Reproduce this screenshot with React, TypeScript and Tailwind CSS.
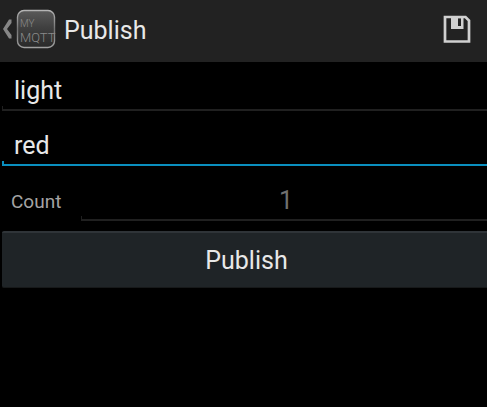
import { useState } from "react";
import type { InputHTMLAttributes } from "react";

type FieldProps = InputHTMLAttributes<HTMLInputElement> & {
  active?: boolean;
};

function Field({ active = false, className = "", ...rest }: FieldProps) {
  return (
    <div className="min-w-0 flex-1">
      <input
        {...rest}
        className={`block h-11 w-full bg-transparent pt-3 text-[25px] leading-8 outline-none ${className}`}
      />
      {/* Holo underline with its short left tick */}
      <div
        className={
          active
            ? "h-[5px] border-b-2 border-l-2 border-[#0a8fbf]"
            : "h-[5px] border-b-2 border-l border-[#202020]"
        }
      />
    </div>
  );
}

function AppLogo() {
  return (
    <svg viewBox="0 0 40 40" className="size-10" role="img" aria-label="My MQTT">
      <defs>
        <linearGradient id="logoFill" x1="0" y1="0" x2="0" y2="1">
          <stop offset="0" stopColor="#5a5a5a" />
          <stop offset="0.45" stopColor="#404040" />
          <stop offset="1" stopColor="#292929" />
        </linearGradient>
        <linearGradient id="logoEdge" x1="0" y1="0" x2="0" y2="1">
          <stop offset="0" stopColor="#b4b4b4" />
          <stop offset="0.5" stopColor="#747474" />
          <stop offset="1" stopColor="#a0a0a0" />
        </linearGradient>
      </defs>
      <rect x="1.5" y="1.5" width="37" height="37" rx="6.5" fill="url(#logoFill)" stroke="url(#logoEdge)" strokeWidth="1.4" />
      <g fill="#8a8a8a" fontFamily="Roboto, sans-serif" fontWeight="300">
        <text x="4" y="18" fontSize="10">MY</text>
        <text x="4" y="33" fontSize="13">MQTT</text>
      </g>
    </svg>
  );
}

function SaveIcon() {
  return (
    <svg viewBox="0 0 28 28" className="size-7" aria-hidden="true">
      <path d="M2 2h20.500L26 5.500V26.500H2z" fill="none" stroke="#d0d0d0" strokeWidth="2.700" />
      <path fillRule="evenodd" d="M8 1h12.500v13H8z M15 3.300v7.700h3V3.300z" fill="#d0d0d0" />
    </svg>
  );
}

export default function App() {
  const [topic, setTopic] = useState("light");
  const [message, setMessage] = useState("red");
  const [count, setCount] = useState("");

  return (
    <div className="min-h-screen bg-black font-[Roboto,sans-serif] text-[#e8e8e8]">
      <header className="flex h-[62px] items-center bg-[#222222] pb-1 pr-4">
        <a href="#" aria-label="Back" className="flex items-center gap-1 pl-[3px]">
          <svg viewBox="0 0 9 20" className="h-5 w-[9px]" aria-hidden="true">
            <path d="M8.500 0.500V4L4 10l4.500 6v3.500H6L0 10 6 .5z" fill="#868686" />
          </svg>
          <AppLogo />
        </a>
        <h1 className="pl-2 pt-1 text-[25px] leading-8">Publish</h1>
        <button type="button" aria-label="Save" className="ml-auto">
          <SaveIcon />
        </button>
      </header>

      <form onSubmit={(e) => e.preventDefault()}>
        <div className="flex flex-col gap-1.5 pl-0.5">
          <div className="flex">
            <Field aria-label="Topic" value={topic} onChange={(e) => setTopic(e.target.value)} className="px-3" />
          </div>
          <div className="flex">
            <Field active aria-label="Message" value={message} onChange={(e) => setMessage(e.target.value)} className="px-3" />
          </div>
          <div className="flex">
            <label htmlFor="count" className="w-[79px] pl-[9px] pt-3.5 text-[19px] leading-8 text-[#a4a4a4]">
              Count
            </label>
            <Field
              id="count"
              inputMode="numeric"
              placeholder="1"
              value={count}
              onChange={(e) => setCount(e.target.value)}
              className="pl-1 text-center placeholder:text-[#707070]"
            />
          </div>
        </div>
        <div className="pl-0.5 pt-2.5">
          <button
            type="submit"
            className="h-[57px] w-full rounded-l-xs border-b border-t-2 border-b-[#17191a] border-t-[#2f3438] bg-[#1f2427] pl-1 pt-0.5 text-[25px] leading-8"
          >
            Publish
          </button>
        </div>
      </form>
    </div>
  );
}
